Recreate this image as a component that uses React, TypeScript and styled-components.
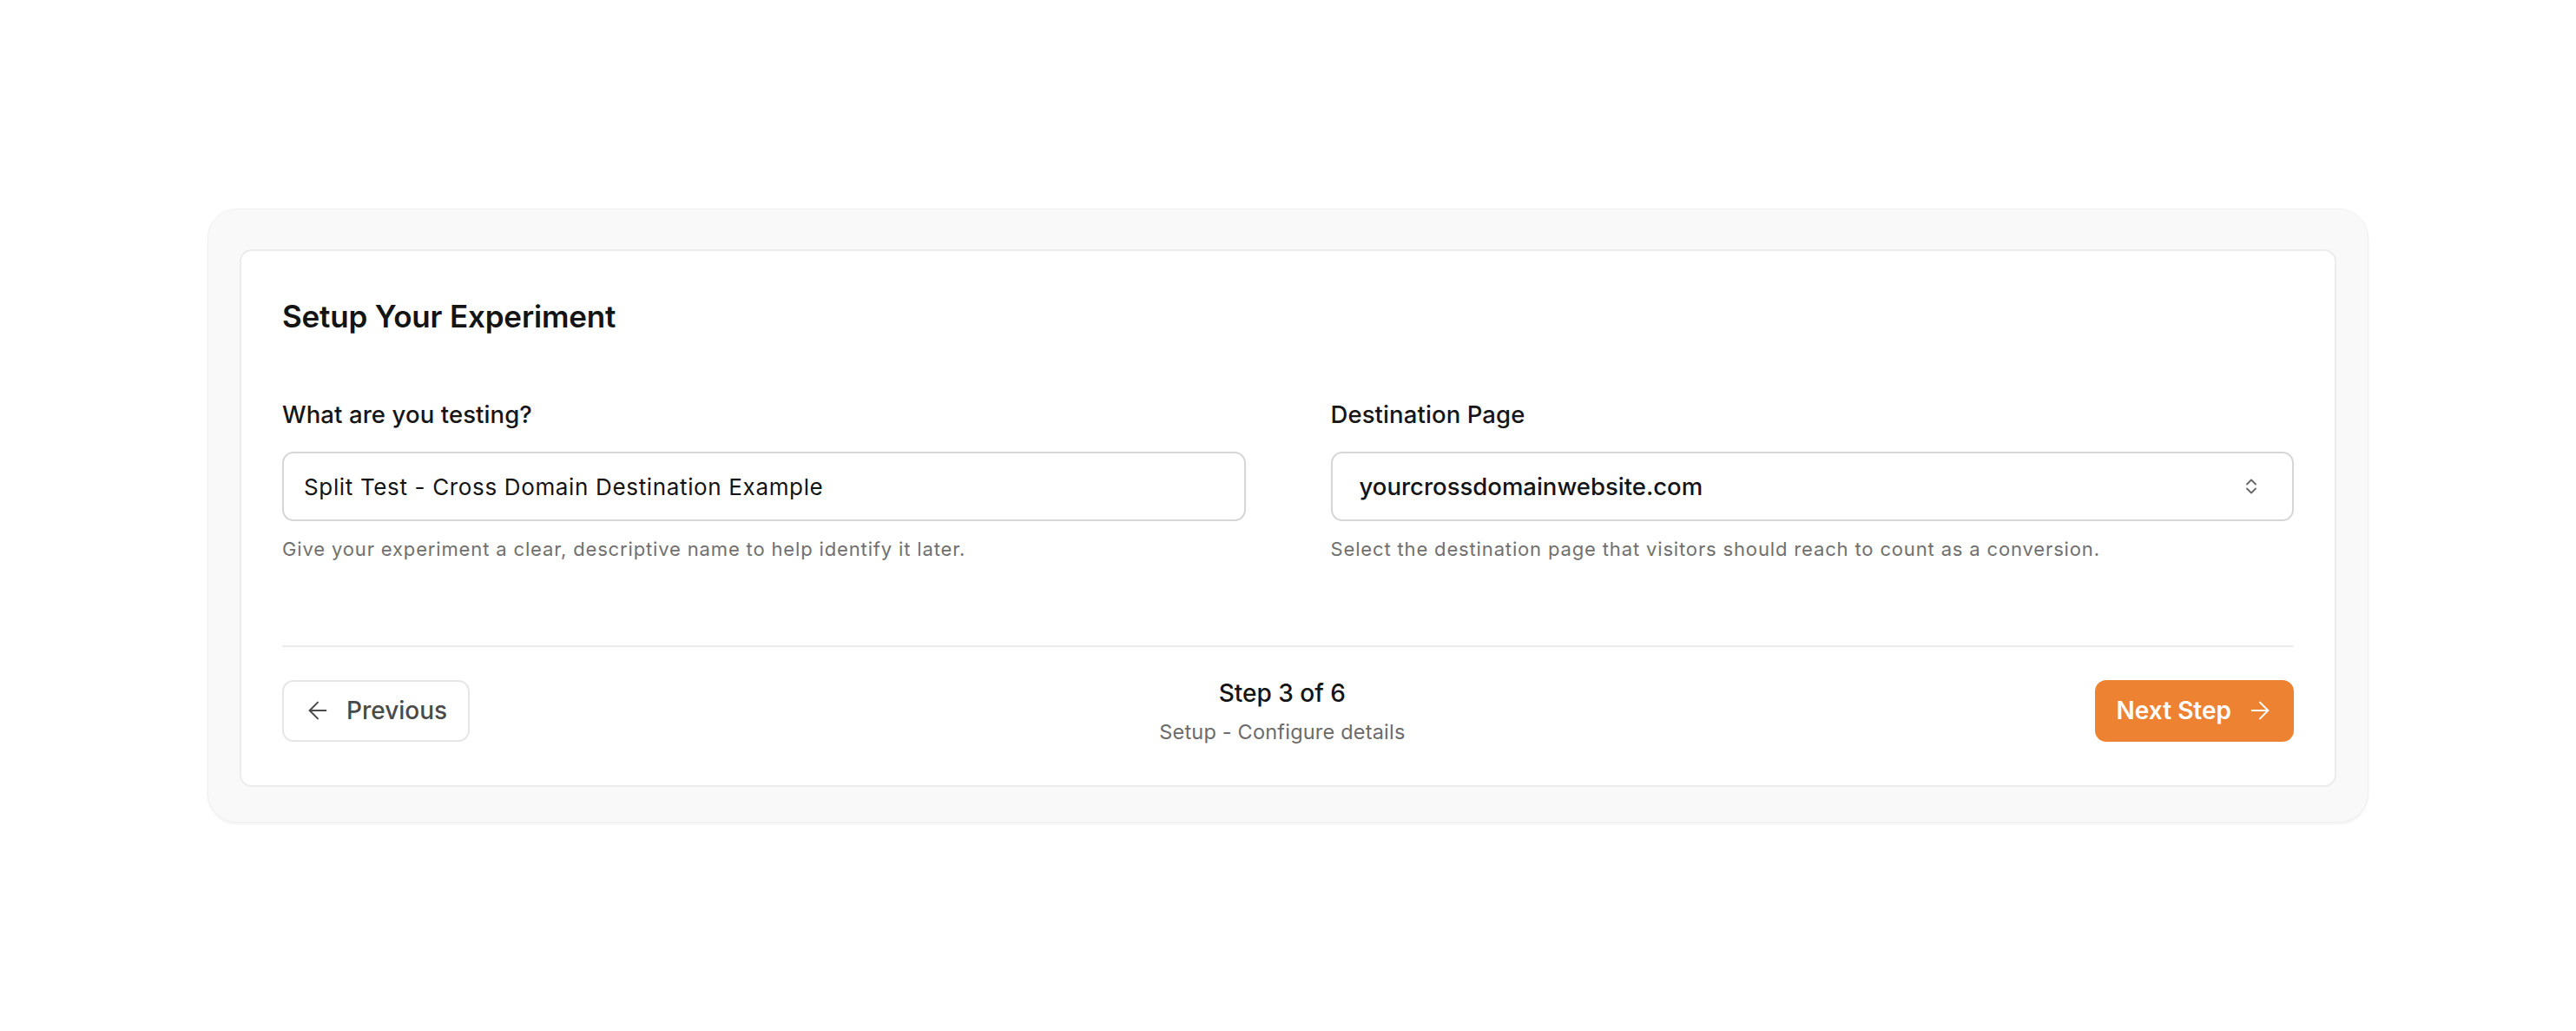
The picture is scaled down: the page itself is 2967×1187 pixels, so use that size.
import React from 'react'
import styled, {createGlobalStyle} from 'styled-components'
import {ArrowLeft, ArrowRight} from 'lucide-react'

const GlobalStyle = createGlobalStyle`
  html, body {
    margin: 0;
    padding: 0;
    background: #ffffff;
    font-family: Inter, "Noto Sans", "Liberation Sans", sans-serif;
    -webkit-font-smoothing: antialiased;
  }
  * {
    box-sizing: border-box;
  }
`

// the stacked up/down carets at the end of the select box
const ChevronsUpDown: React.FC = () => (
  <svg width="14" height="20" viewBox="0 0 14 20" fill="none" stroke="#666666" strokeWidth="1.8" strokeLinecap="round" strokeLinejoin="round">
    <path d="M2 7.5 L7 2.5 L12 7.5" />
    <path d="M2 12.5 L7 17.5 L12 12.5" />
  </svg>
)

const App: React.FC = () => {
  return (
    <>
      <GlobalStyle />
      <StyledPage>
        <StyledShell>
          <StyledCard>
            <StyledTitle>Setup Your Experiment</StyledTitle>
            <StyledFields>
              <StyledField>
                <StyledLabel htmlFor="experiment-name">What are you testing?</StyledLabel>
                <StyledInput
                  id="experiment-name"
                  type="text"
                  defaultValue="Split Test - Cross Domain Destination Example"
                />
                <StyledHint>Give your experiment a clear, descriptive name to help identify it later.</StyledHint>
              </StyledField>
              <StyledField>
                <StyledLabel as="span">Destination Page</StyledLabel>
                <StyledSelect role="combobox" tabIndex={0}>
                  <span>yourcrossdomainwebsite.com</span>
                  <ChevronsUpDown />
                </StyledSelect>
                <StyledHint>Select the destination page that visitors should reach to count as a conversion.</StyledHint>
              </StyledField>
            </StyledFields>
            <StyledDivider />
            <StyledFooter>
              <StyledButton variant="ghost">
                <ArrowLeft size={32} strokeWidth={1.5} />
                Previous
              </StyledButton>
              <StyledStep>
                <StyledStepCount>Step 3 of 6</StyledStepCount>
                <StyledStepName>Setup - Configure details</StyledStepName>
              </StyledStep>
              <StyledButton variant="primary">
                Next Step
                <ArrowRight size={32} strokeWidth={1.5} />
              </StyledButton>
            </StyledFooter>
          </StyledCard>
        </StyledShell>
      </StyledPage>
    </>
  )
}

const StyledPage = styled.div`
  min-height: 100vh;
  display: flex;
  align-items: center;
  justify-content: center;
`

const StyledShell = styled.div`
  width: 2489px;
  background: #f9f9f9;
  border: 1px solid #f1f1f1;
  border-radius: 34px;
  padding: 46px 36px 40px;
  box-shadow: 0 2px 3px rgba(0, 0, 0, 0.06);
`

const StyledCard = styled.div`
  background: #ffffff;
  border: 2px solid #ececec;
  border-radius: 14px;
  padding: 49px 47px 46px;
`

const StyledTitle = styled.h2`
  margin: 0;
  font-size: 35px;
  line-height: 52px;
  font-weight: 600;
  color: #141414;
  letter-spacing: -0.005em;
`

const StyledFields = styled.div`
  margin-top: 67px;
  display: grid;
  grid-template-columns: 1fr 1fr;
  column-gap: 98px;
`

const StyledField = styled.div`
  display: flex;
  flex-direction: column;
`

const StyledLabel = styled.label`
  margin-bottom: 23px;
  font-size: 27.5px;
  line-height: 40px;
  font-weight: 500;
  letter-spacing: 0.1px;
  color: #161616;
`

const StyledInput = styled.input`
  height: 80px;
  width: 100%;
  border: 2px solid #d6d6d6;
  border-radius: 13px;
  padding: 0 23px;
  background: #ffffff;
  font-family: inherit;
  font-size: 26px;
  font-weight: 400;
  letter-spacing: 0.65px;
  color: #141414;
  outline: none;
`

const StyledSelect = styled.div`
  height: 80px;
  display: flex;
  align-items: center;
  justify-content: space-between;
  border: 2px solid #d6d6d6;
  border-radius: 13px;
  padding: 0 40px 0 31px;
  background: #ffffff;
  font-size: 27.5px;
  font-weight: 500;
  color: #141414;
  cursor: pointer;
  outline: none;
`

const StyledHint = styled.p`
  margin: 17px 0 0;
  font-size: 22px;
  line-height: 30px;
  letter-spacing: 0.85px;
  color: #707070;
`

const StyledDivider = styled.hr`
  margin: 96px 0 0;
  height: 2px;
  border: 0;
  background: #ebebeb;
`

const StyledFooter = styled.div`
  padding-top: 33px;
  display: flex;
  align-items: center;
  justify-content: space-between;
`

const StyledButton = styled.button<{variant: 'ghost' | 'primary'}>`
  height: 71px;
  display: inline-flex;
  align-items: center;
  gap: 17px;
  border-radius: 13px;
  font-family: inherit;
  font-size: 28px;
  cursor: pointer;
  ${(props) =>
    props.variant === 'primary'
      ? `
    padding: 0 23px 0 25px;
    border: 0;
    background: #ee8233;
    color: #ffffff;
    font-weight: 600;
  `
      : `
    padding: 0 24px 0 23px;
    border: 2px solid #e6e6e6;
    background: #ffffff;
    color: #4a4a4a;
    font-weight: 500;
  `}
`

const StyledStep = styled.div`
  text-align: center;
`

const StyledStepCount = styled.div`
  font-size: 28px;
  line-height: 40px;
  font-weight: 500;
  color: #141414;
`

const StyledStepName = styled.div`
  margin-top: 9px;
  font-size: 23.5px;
  line-height: 31px;
  letter-spacing: 0.2px;
  color: #6b6b6b;
`

export default App
